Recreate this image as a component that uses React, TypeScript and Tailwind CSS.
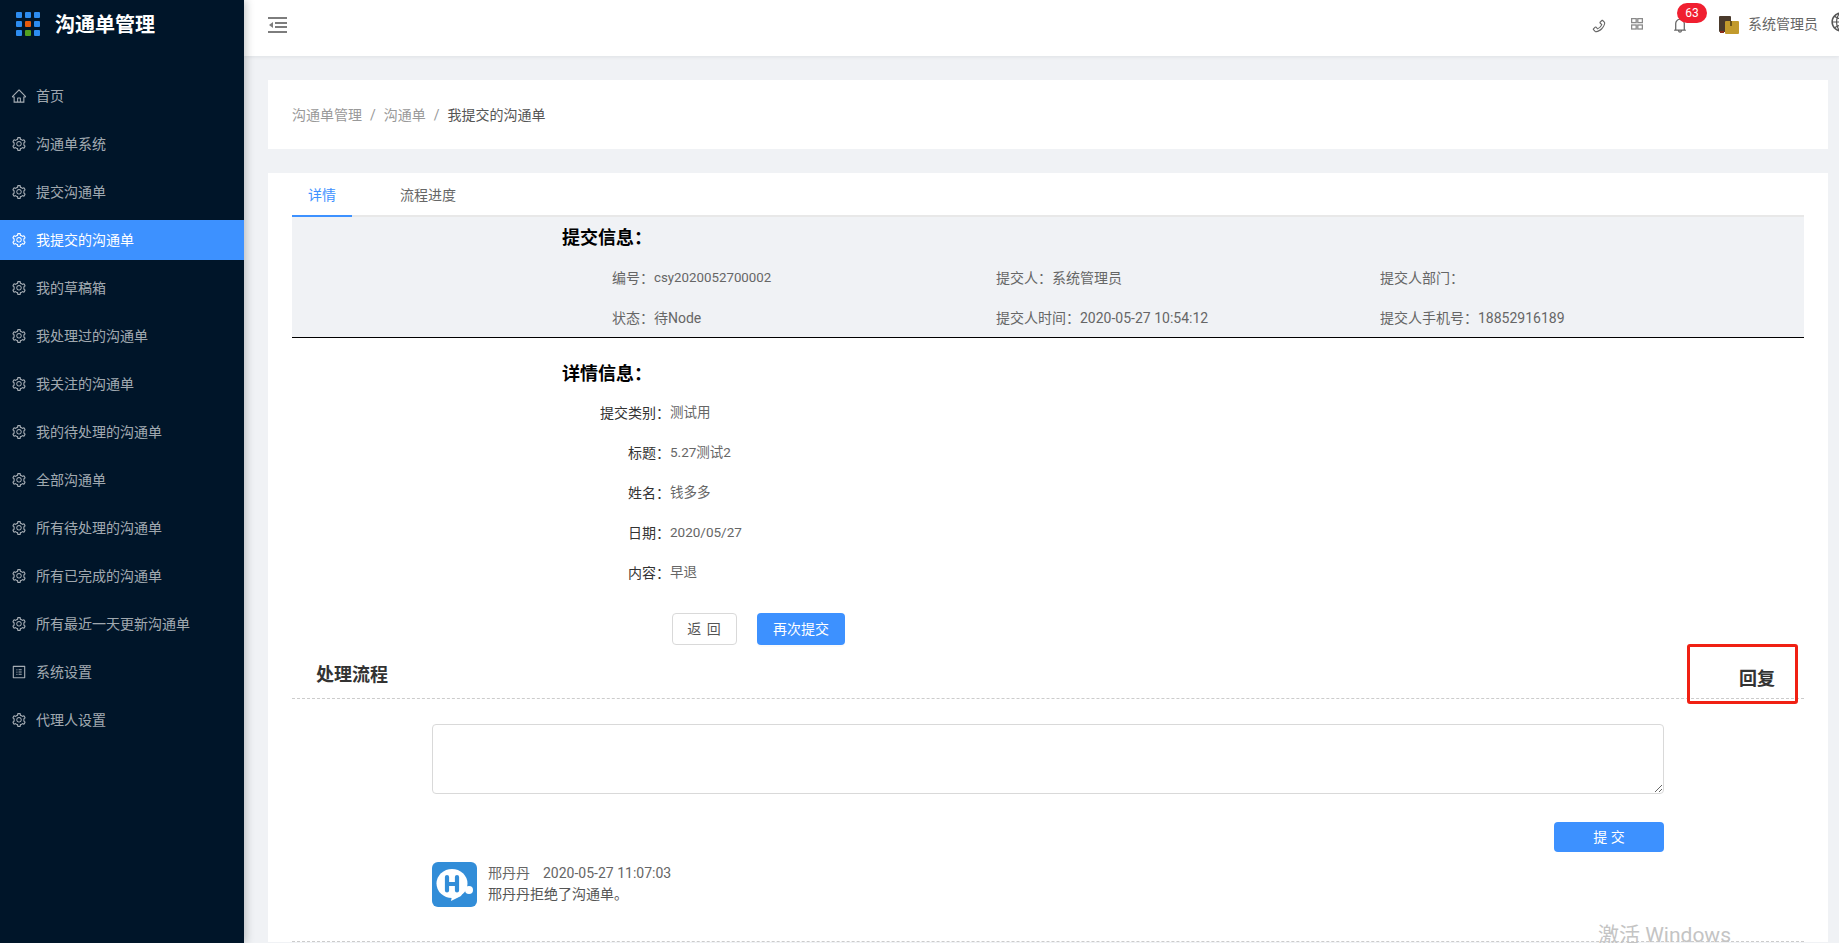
import React from "react";
import {
  AiOutlineHome,
  AiOutlineSetting,
  AiOutlineProfile,
  AiOutlinePhone,
  AiOutlineBell,
  AiOutlineGlobal,
} from "react-icons/ai";

const menu = [
  { label: "首页", icon: "home" },
  { label: "沟通单系统" },
  { label: "提交沟通单" },
  { label: "我提交的沟通单", active: true },
  { label: "我的草稿箱" },
  { label: "我处理过的沟通单" },
  { label: "我关注的沟通单" },
  { label: "我的待处理的沟通单" },
  { label: "全部沟通单" },
  { label: "所有待处理的沟通单" },
  { label: "所有已完成的沟通单" },
  { label: "所有最近一天更新沟通单" },
  { label: "系统设置", icon: "profile" },
  { label: "代理人设置" },
];

const logoDots = [
  "#2d8cf0", "#2d8cf0", "#2d8cf0",
  "#2d8cf0", "#e8590c", "#2d8cf0",
  "#2d8cf0", "#52a01f", "#2d8cf0",
];

const submitInfo = [
  ["编号：", "csy2020052700002", "pt-[1px] text-[13.3px]"],
  ["提交人：", "系统管理员", ""],
  ["提交人部门：", "", ""],
  ["状态：", "待Node", ""],
  ["提交人时间：", "2020-05-27 10:54:12", ""],
  ["提交人手机号：", "18852916189", ""],
];

const detailInfo = [
  ["提交类别：", "测试用"],
  ["标题：", "5.27测试2"],
  ["姓名：", "钱多多"],
  ["日期：", "2020/05/27"],
  ["内容：", "早退"],
];

const Sidebar: React.FC = () => (
  <aside className="relative z-20 w-[244px] shrink-0 bg-[#001529] shadow-[2px_0_8px_rgba(29,35,41,0.25)]">
    <div className="flex h-12 items-center pl-4">
      <div className="grid w-6 grid-cols-3 gap-[3px]">
        {logoDots.map((c, i) => (
          <span key={i} className="h-[6px] w-[6px] rounded-[1px]" style={{ background: c }} />
        ))}
      </div>
      <span className="ml-[15px] pt-[2px] text-[20px] font-bold text-white">沟通单管理</span>
    </div>
    <nav className="mt-7 flex flex-col gap-2">
      {menu.map((item) => (
        <div
          key={item.label}
          className={`flex h-10 items-center pl-[11px] text-sm ${
            item.active ? "bg-[#3d91ff] text-white" : "text-[#ffffffa6]"
          }`}
        >
          {item.icon === "home" ? (
            <AiOutlineHome size={16} />
          ) : item.icon === "profile" ? (
            <AiOutlineProfile size={16} />
          ) : (
            <AiOutlineSetting size={16} />
          )}
          <span className="ml-[9px]">{item.label}</span>
        </div>
      ))}
    </nav>
  </aside>
);

const Header: React.FC = () => (
  <header className="relative z-10 flex h-14 shrink-0 items-center bg-white pl-6 shadow-[0_1px_4px_rgba(0,21,41,0.08)]">
    <svg width="19" height="16" viewBox="0 0 19 16" className="mb-[6px] text-[#7d7d7d]" fill="currentColor">
      <rect x="0" y="0" width="19" height="2" />
      <rect x="7" y="5" width="12" height="2" />
      <rect x="7" y="9" width="12" height="2" />
      <rect x="0" y="14" width="19" height="2" />
      <path d="M1 8l4-3v6z" />
    </svg>
    <div className="ml-auto flex h-full w-[248px] shrink-0 items-center overflow-hidden text-[#666]">
      <AiOutlinePhone size={16} className="mt-[-4px] shrink-0" />
      <svg width="12" height="12" viewBox="0 0 12 12" className="ml-6 mt-[-8px] shrink-0" fill="none" stroke="#8a8a8a" strokeWidth="1.3">
        <rect x="0.6" y="0.6" width="4.6" height="4" />
        <rect x="6.8" y="0.6" width="4.6" height="4" />
        <rect x="0.6" y="7" width="4.6" height="4" />
        <rect x="6.8" y="7" width="4.6" height="4" />
      </svg>
      <AiOutlineBell size={18} className="ml-7 mt-[-6px] shrink-0" />
      <svg width="20" height="18" viewBox="0 0 20 18" className="ml-[30px] mt-[-7px] shrink-0">
        <rect x="0" y="0" width="12" height="16" rx="1" fill="#4a3a2c" />
        <rect x="1" y="15" width="4" height="2" fill="#8a2a1a" />
        <rect x="6" y="5" width="14" height="13" rx="1" fill="#c29a2c" />
        <rect x="11" y="5" width="2" height="5" fill="#6b5418" />
      </svg>
      <span className="ml-[9px] mt-[-8px] shrink-0 whitespace-nowrap text-sm">系统管理员</span>
      <AiOutlineGlobal size={22} className="ml-3 mt-[-12px] shrink-0 text-[#555]" />
    </div>
    <span className="absolute left-[1433px] top-[3px] z-10 flex h-5 w-[30px] items-center justify-center rounded-[10px] bg-[#f01f30] text-xs text-white">
      63
    </span>
  </header>
);

const App: React.FC = () => (
  <div className="flex h-[943px] overflow-hidden bg-[#f0f2f5] font-['Roboto','Noto_Sans_CJK_SC',sans-serif] text-sm text-[#666]">
    <Sidebar />
    <div className="flex min-w-0 flex-1 flex-col">
      <Header />
      <main className="relative flex-1 pl-6 pr-[11px] pt-6">
        <div className="flex h-[69px] items-center bg-white pl-6 text-[#999]">
          <span>沟通单管理</span>
          <span className="mx-2">/</span>
          <span>沟通单</span>
          <span className="mx-2">/</span>
          <span className="text-[#555]">我提交的沟通单</span>
        </div>

        <section className="mt-6 bg-white px-6">
          <div className="flex h-11 border-b-2 border-[#e8e8e8] pt-[2px]">
            <div className="mb-[-2px] flex w-[60px] items-center justify-center border-b-2 border-[#3d91ff] text-[#3d91ff]">
              详情
            </div>
            <div className="ml-8 flex items-center px-4">流程进度</div>
          </div>

          <div className="h-[121px] border-b border-black bg-[#f0f2f5]">
            <h3 className="flex h-10 items-center pl-[270px] pt-[2px] text-lg font-bold text-black">提交信息：</h3>
            <div className="ml-[320px] grid w-[1152px] grid-cols-3">
              {submitInfo.map(([k, v, cls]) => (
                <div key={k} className="flex h-10 items-center pt-[1px]">
                  {k}
                  <span className={cls}>{v}</span>
                </div>
              ))}
            </div>
          </div>

          <h3 className="mt-[26px] flex h-5 items-center pl-[270px] text-lg font-bold text-black">详情信息：</h3>
          <div className="mt-[9px]">
            {detailInfo.map(([k, v]) => (
              <div key={k} className="flex h-10 items-center">
                <span className="w-[378px] text-right text-[#333]">{k}</span>
                <span className="text-[13.5px]">{v}</span>
              </div>
            ))}
          </div>

          <div className="ml-[380px] mt-5 flex gap-5">
            <button className="h-8 w-[65px] rounded-[4px] border border-[#d9d9d9] bg-white tracking-[1px] text-[#555]">返 回</button>
            <button className="h-8 w-[88px] rounded-[4px] bg-[#3d91ff] text-white shadow-[0_2px_0_rgba(0,0,0,0.02)]">再次提交</button>
          </div>

          <div className="relative flex h-[54px] justify-between border-b border-dashed border-[#ccc] pl-6 pr-[29px]">
            <span className="pt-[17px] text-lg leading-[26px] font-bold text-[#333]">处理流程</span>
            <span className="pt-[21px] text-lg leading-[26px] font-bold text-[#333]">回复</span>
            <div className="absolute right-[6px] top-[-1px] h-[60px] w-[111px] rounded-[3px] border-[3px] border-[#f02013]" />
          </div>

          <div className="mx-[140px] mt-[25px]">
            <textarea className="block h-[70px] w-full rounded-[4px] border border-[#d9d9d9] bg-white" />
            <div className="mt-7 flex justify-end">
              <button className="h-[30px] w-[110px] rounded-[4px] bg-[#3d91ff] text-white">提 交</button>
            </div>
            <div className="mt-[10px] flex">
              <svg width="45" height="45" viewBox="0 0 45 45" className="shrink-0">
                <rect width="45" height="45" rx="6" fill="#328dd8" />
                <ellipse cx="20" cy="21.5" rx="15.5" ry="14.5" fill="#fff" />
                <circle cx="37" cy="28" r="4" fill="#fff" />
                <path d="M20 34l11-4-2 4-10 5 1-5z" fill="#fff" />
                <path d="M15 15v13.5M25 15v13.5M15 22h10" stroke="#328dd8" strokeWidth="4.2" strokeLinecap="round" />
              </svg>
              <div className="ml-[11px] pt-[1px] leading-[21px]">
                <div>
                  邢丹丹
                  <span className="ml-[13px]">2020-05-27 11:07:03</span>
                </div>
                <div className="text-[#555]">邢丹丹拒绝了沟通单。</div>
              </div>
            </div>
          </div>
          <div className="mt-[34px] border-b border-dashed border-[#ccc]" />
        </section>

        <span className="absolute left-[1354px] top-[864px] text-[21px] text-[#c4c4c4]">激活 Windows</span>
      </main>
    </div>
  </div>
);

export default App;
